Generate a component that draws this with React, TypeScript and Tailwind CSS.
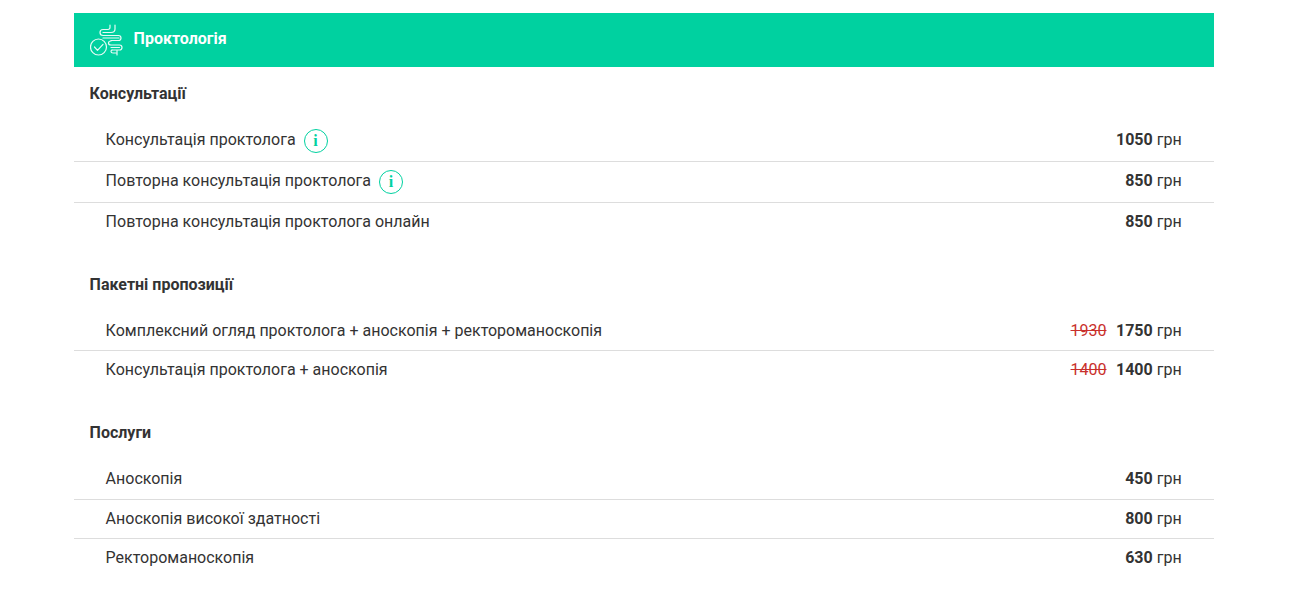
const sections = [
  {
    title: 'Консультації',
    rows: [
      { name: 'Консультація проктолога', price: '1050', info: true },
      { name: 'Повторна консультація проктолога', price: '850', info: true },
      { name: 'Повторна консультація проктолога онлайн', price: '850' },
    ],
  },
  {
    title: 'Пакетні пропозиції',
    rows: [
      { name: 'Комплексний огляд проктолога + аноскопія + ректороманоскопія', price: '1750', old: '1930' },
      { name: 'Консультація проктолога + аноскопія', price: '1400', old: '1400' },
    ],
  },
  {
    title: 'Послуги',
    rows: [
      { name: 'Аноскопія', price: '450' },
      { name: 'Аноскопія високої здатності', price: '800' },
      { name: 'Ректороманоскопія', price: '630' },
    ],
  },
];

function BowelIcon() {
  return (
    <svg width="34" height="32" viewBox="0 0 34 32" fill="none" stroke="white" strokeOpacity="0.9" strokeWidth="1.2" strokeLinecap="round" strokeLinejoin="round">
      <path d="M20 1v2.500c0 1.200-.8 2-2 2h-5c-1.800 0-3 1.300-3 3s1.200 3 3 3h15.500c1.500 0 2.500 1 2.500 2.500s-1 2.500-2.500 2.500H21" />
      <path d="M25 1v4c0 2.500-1.500 3.500-4 3.500h-8" />
      <path d="M21 17c-1.500 0-2.500.8-2.500 2s1 2 2.500 2h8.500c1.500 0 2.500 1 2.500 2.500S31 26 29.500 26H22" />
      <path d="M13 14h16M21 23.500h8.500M22 26c-.7.3-1 .8-1 1.500 0 1 .7 1.500 2 1.500h3M27 26.500V31" />
      <circle cx="8.500" cy="23" r="8" />
      <path d="M4.500 23l3 3.300 5.500-6" />
    </svg>
  );
}

function InfoBadge() {
  return (
    <span className="ml-2 inline-flex h-6 w-6 items-center justify-center rounded-full border border-[#00d1a0] font-['Liberation_Serif',serif] text-base font-bold leading-none text-[#00d1a0]">
      i
    </span>
  );
}

export default function App() {
  return (
    <div className="h-[595px] overflow-hidden bg-white font-['Roboto',sans-serif] text-base leading-[22.4px] text-[#333333]">
      <div className="ml-[74px] w-[1140px] pt-[13px]">
        <div className="flex h-[54px] items-center bg-[#00d1a0] pl-[15.6px] font-bold text-white">
          <BowelIcon />
          <span className="mb-[2px] ml-[10px]">Проктологія</span>
        </div>

        {sections.map((section) => (
          <div key={section.title} className="mb-[17.1px]">
            <h3 className="pb-[15.7px] pl-[15.6px] pt-[15.5px] font-bold">{section.title}</h3>
            {section.rows.map((row, i) => (
              <div
                key={row.name}
                className={
                  'flex items-start justify-between py-2 pl-[31.6px] pr-[32.4px] ' +
                  (i < section.rows.length - 1 ? 'border-b border-[#dddddd]' : '')
                }
              >
                <div className="flex items-start">
                  {row.name}
                  {row.info && <InfoBadge />}
                </div>
                <div>
                  {row.old && <span className="mr-[9.5px] text-[#c9302c] line-through">{row.old}</span>}
                  <b>{row.price}</b> грн
                </div>
              </div>
            ))}
          </div>
        ))}
      </div>
    </div>
  );
}
